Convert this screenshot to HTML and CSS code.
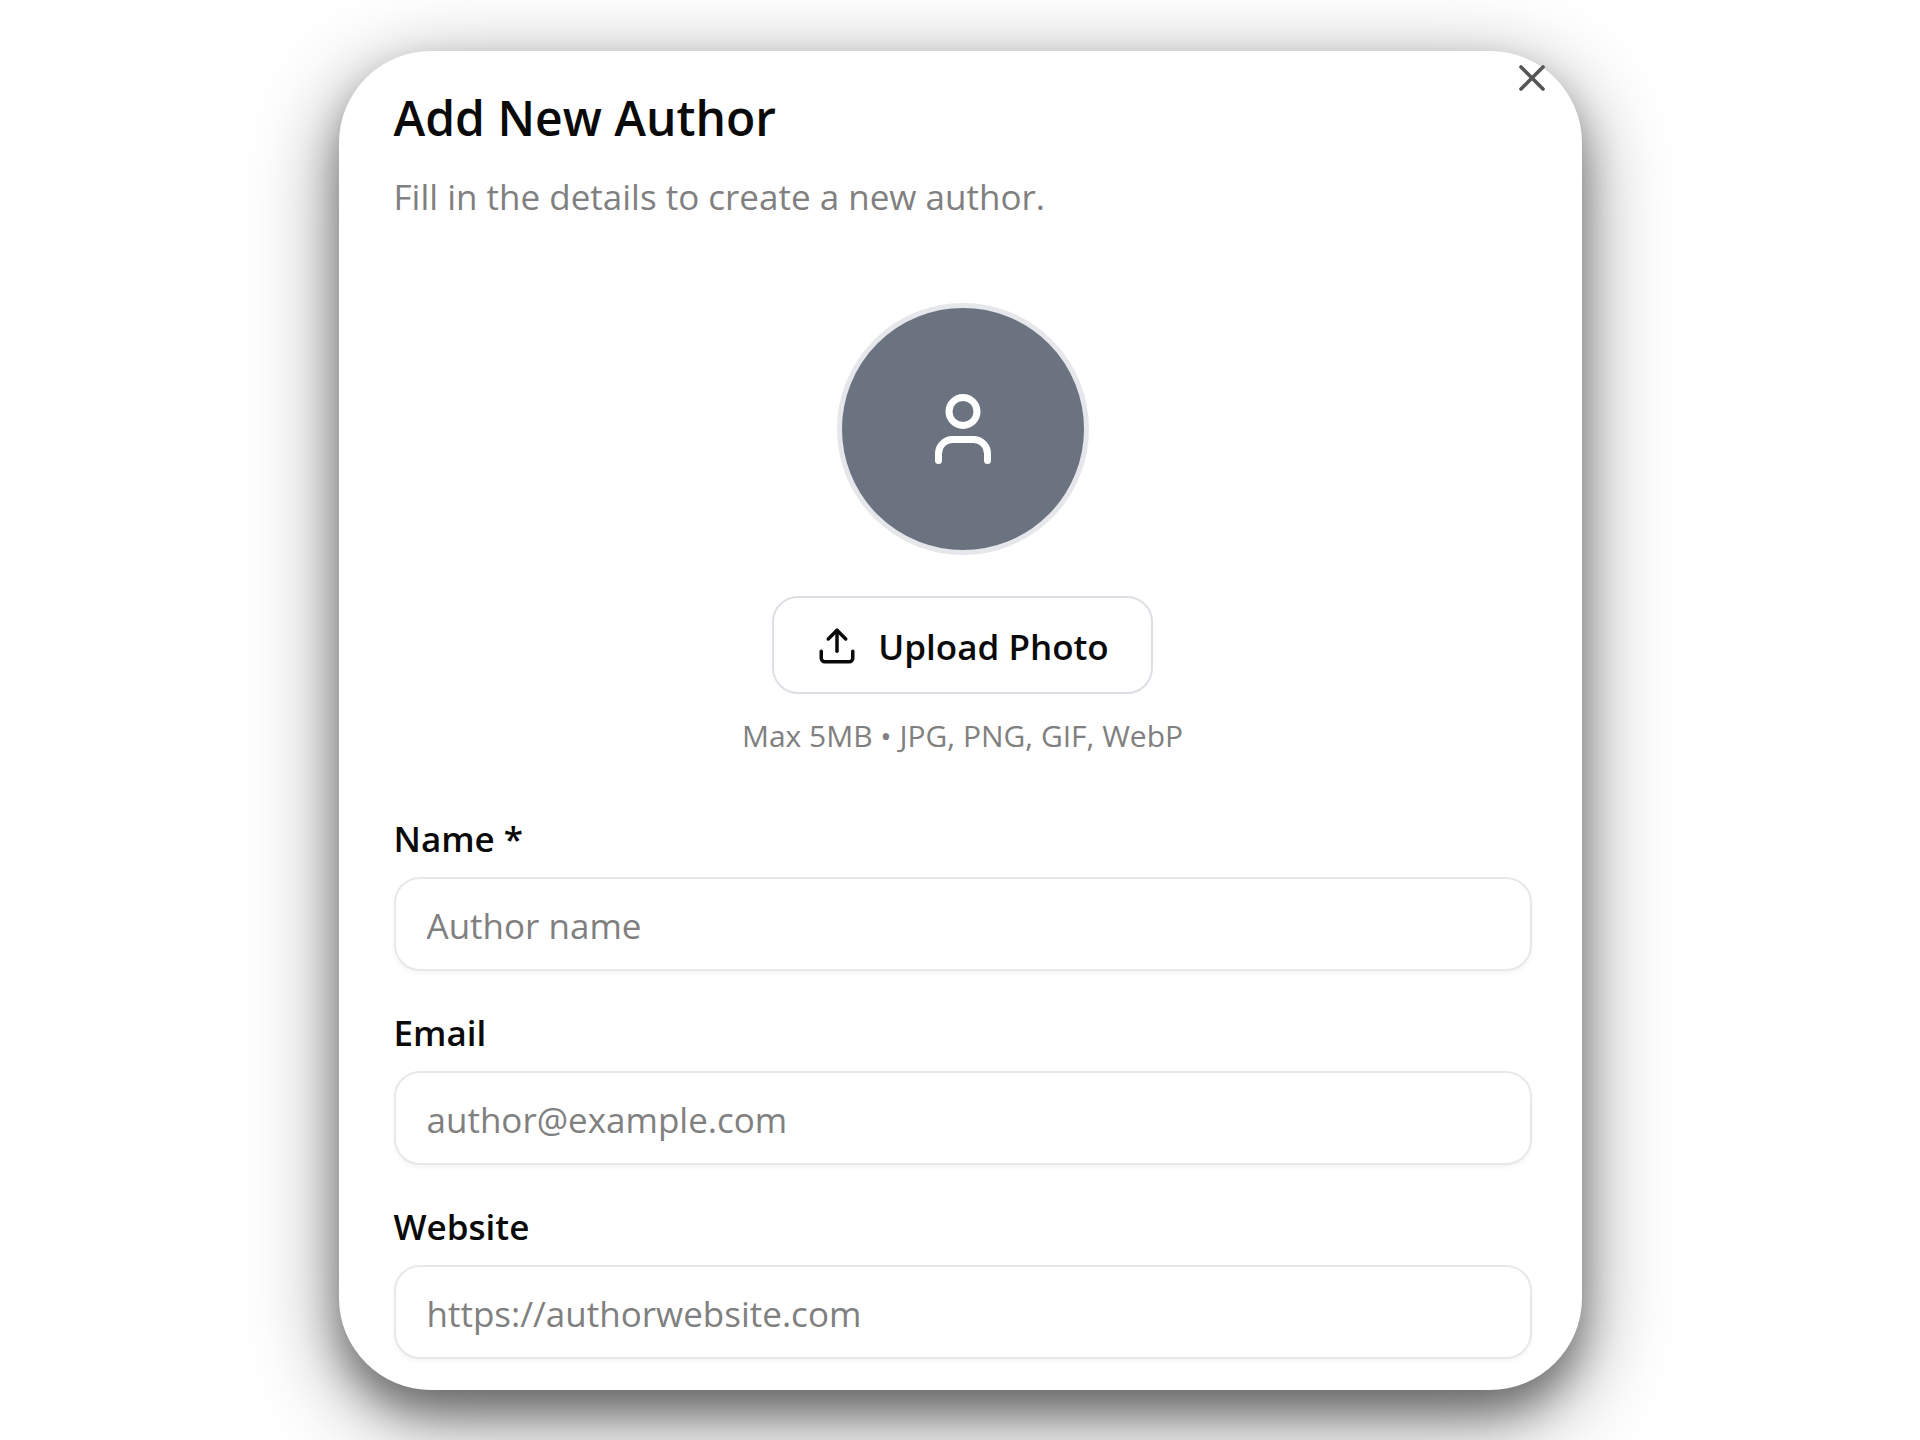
FILE: index.html
```html
<!doctype html>
<html lang="en">
<head>
	<meta charset="UTF-8">
	<meta name="viewport" content="width=device-width, initial-scale=1.0">
	<title>Add New Author</title>
	<link rel="stylesheet" href="styles.css">
</head>
<body>
	<main class="page">
		<form class="dialog">
			<button class="close" type="button" aria-label="Close">
				<svg viewBox="0 0 24 24"><path d="M18 6 6 18"/><path d="m6 6 12 12"/></svg>
			</button>

			<h1 class="title">Add New Author</h1>
			<p class="subtitle">Fill in the details to create a new author.</p>

			<div class="photo">
				<div class="avatar">
					<svg viewBox="0 0 24 24"><path d="M19 21v-2a4 4 0 0 0-4-4H9a4 4 0 0 0-4 4v2"/><circle cx="12" cy="7" r="4"/></svg>
				</div>
				<button class="upload" type="button">
					<svg viewBox="0 0 24 24"><path d="M12 3v12"/><path d="m17 8-5-5-5 5"/><path d="M21 15v4a2 2 0 0 1-2 2H5a2 2 0 0 1-2-2v-4"/></svg>
					Upload Photo
				</button>
				<p class="hint">Max 5MB • JPG, PNG, GIF, WebP</p>
			</div>

			<div class="fields">
				<div class="field">
					<label for="name">Name *</label>
					<input id="name" type="text" placeholder="Author name">
				</div>
				<div class="field">
					<label for="email">Email</label>
					<input id="email" type="email" placeholder="author@example.com">
				</div>
				<div class="field">
					<label for="website">Website</label>
					<input id="website" type="url" placeholder="https://authorwebsite.com">
				</div>
			</div>
		</form>
	</main>
</body>
</html>
```
FILE: styles.css
```css
* {
	box-sizing: border-box;
}

body {
	margin: 0;
	background-color: #fff;
	color: #0a0a0a;
	font: 400 35px "Segoe UI", "Open Sans", "Noto Sans", sans-serif;
}

h1,
p {
	margin: 0;
}

button,
input {
	font: inherit;
	color: inherit;
}

svg {
	fill: none;
	stroke: currentColor;
	stroke-width: 2;
	stroke-linecap: round;
	stroke-linejoin: round;
}

.page {
	display: flex;
	justify-content: center;
	padding: 51px 24px;
}

.dialog {
	position: relative;
	width: 100%;
	max-width: 1243px;
	padding: 34px 50px 31px 55px;
	border-radius: 92px;
	background-color: #fff;
	box-shadow: 0 22px 36px rgba(0, 0, 0, .3), 0 25px 84px rgba(0, 0, 0, .5);
}

.close {
	position: absolute;
	top: 5px;
	right: 28px;
	padding: 0;
	border: 0;
	background: none;
	color: #555;
	cursor: pointer;
}

.close svg {
	display: block;
	width: 44px;
	height: 44px;
}

.title {
	font-size: 48px;
	font-weight: 600;
	line-height: 66px;
}

.subtitle {
	margin-top: 20px;
	color: #808080;
	line-height: 52px;
}

.photo {
	display: flex;
	flex-direction: column;
	align-items: center;
	margin-top: 80px;
}

.avatar {
	display: flex;
	align-items: center;
	justify-content: center;
	width: 252px;
	height: 252px;
	border: 5px solid #e5e7eb;
	border-radius: 50%;
	background-color: #6b7280;
	color: #fff;
}

.avatar svg {
	width: 84px;
	height: 84px;
}

.upload {
	display: flex;
	align-items: center;
	gap: 20px;
	height: 98px;
	margin-top: 41px;
	padding: 2px 42px 0;
	border: 2px solid #dcdfe4;
	border-radius: 26px;
	background-color: #fff;
	font-weight: 600;
	cursor: pointer;
}

.upload svg {
	width: 42px;
	height: 42px;
}

.hint {
	margin-top: 20px;
	color: #808080;
	font-size: 30px;
	line-height: 44px;
}

.fields {
	display: flex;
	flex-direction: column;
	gap: 38px;
	margin-top: 57px;
}

.field label {
	display: block;
	margin-bottom: 14px;
	font-weight: 600;
	line-height: 48px;
}

.field input {
	display: block;
	width: 100%;
	height: 94px;
	padding: 2px 31px 0;
	border: 2px solid #e8e8e8;
	border-radius: 26px;
	background-color: #fff;
	box-shadow: 0 3px 5px rgba(0, 0, 0, .04);
}

.field input::placeholder {
	color: #808080;
	opacity: 1;
}
```
